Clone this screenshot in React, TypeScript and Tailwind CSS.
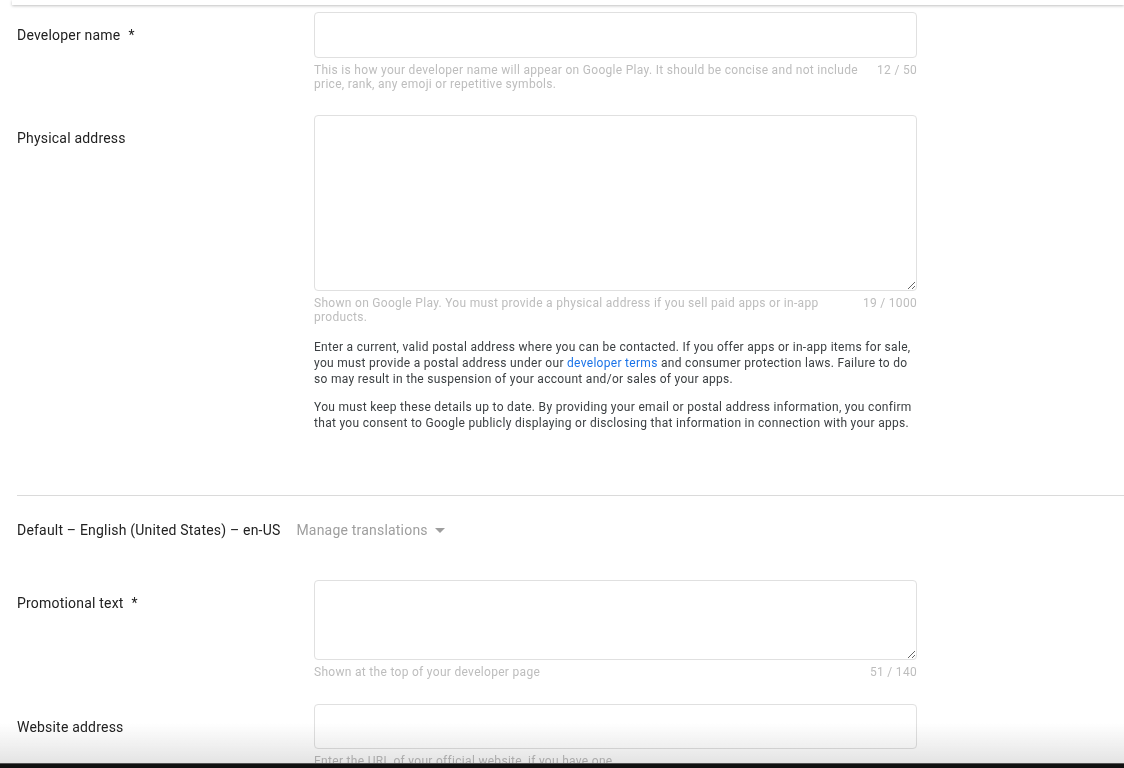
import { ReactNode } from "react";

const font = { fontFamily: "Roboto, 'Liberation Sans', sans-serif" };

function Helper({ text, count }: { text: string; count: string }) {
  return (
    <div className="mt-[5px] flex justify-between gap-3 text-[12px] leading-[14px] tracking-[0.3px] text-[#bdbdbd]">
      <p className="max-w-[552px]">{text}</p>
      <span className="shrink-0">{count}</span>
    </div>
  );
}

function Row({ label, required, children }: { label: string; required?: boolean; children: ReactNode }) {
  return (
    <div className="flex">
      <div className="w-[297px] shrink-0 pt-[13px] text-[14px] leading-[20px] tracking-[0.2px] text-[#212121]">
        {label}
        {required && <span className="ml-2">*</span>}
      </div>
      <div className="w-[603px]">{children}</div>
    </div>
  );
}

export default function App() {
  return (
    <div style={font} className="relative h-[768px] w-[1124px] overflow-hidden bg-white">
      <div className="ml-3 h-[5px] bg-white shadow-[0_1px_3px_rgba(0,0,0,0.25)]" />

      <div className="px-[17px] pt-[7px]">
        <Row label="Developer name" required>
          <input readOnly className="block h-[46px] w-full rounded border border-[#e0e0e0] bg-white outline-none" />
          <Helper
            text="This is how your developer name will appear on Google Play. It should be concise and not include price, rank, any emoji or repetitive symbols."
            count="12 / 50"
          />
        </Row>

        <div className="mt-6">
          <Row label="Physical address">
            <textarea readOnly className="block h-[176px] w-full resize-y rounded border border-[#e0e0e0] bg-white outline-none" />
            <Helper
              text="Shown on Google Play. You must provide a physical address if you sell paid apps or in-app products."
              count="19 / 1000"
            />
            <p className="mt-[15px] text-[12px] leading-[16px] tracking-[0.3px] text-[#3c4043]">
              Enter a current, valid postal address where you can be contacted. If you offer apps or in-app items for sale, you must provide a postal address under our{" "}
              <a className="text-[#1a73e8]">developer terms</a> and consumer protection laws. Failure to do so may result in the suspension of your account and/or sales of your apps.
            </p>
            <p className="mt-3 text-[12px] leading-[16px] tracking-[0.3px] text-[#3c4043]">
              You must keep these details up to date. By providing your email or postal address information, you confirm that you consent to Google publicly displaying or disclosing that information in connection with your apps.
            </p>
          </Row>
        </div>
      </div>

      <div className="ml-[17px] mt-[64px] border-t border-[#dadada]" />

      <div className="px-[17px]">
        <div className="mt-[24px] flex items-center text-[14px] leading-[20px] tracking-[0.2px]">
          <span className="text-[#212121]">Default – English (United States) – en-US</span>
          <span className="ml-4 flex items-center text-[#9e9e9e]">
            Manage translations
            <svg width="10" height="5" viewBox="0 0 10 5" className="ml-[7px]">
              <path d="M0 0h10L5 5z" fill="#9e9e9e" />
            </svg>
          </span>
        </div>

        <div className="mt-[40px]">
          <Row label="Promotional text" required>
            <textarea readOnly className="block h-[80px] w-full resize-y rounded border border-[#e0e0e0] bg-white outline-none" />
            <Helper text="Shown at the top of your developer page" count="51 / 140" />
          </Row>
        </div>

        <div className="mt-[25px]">
          <Row label="Website address">
            <input readOnly className="block h-[45px] w-full rounded border border-[#e0e0e0] bg-white outline-none" />
            <Helper text="Enter the URL of your official website, if you have one" count="" />
          </Row>
        </div>
      </div>

      <div className="pointer-events-none absolute inset-x-0 bottom-0">
        <div className="h-[40px] bg-gradient-to-b from-white/0 to-[#e4e4e4] mix-blend-multiply" />
        <div className="h-[5px] border-t border-[#555] bg-[#111]" />
      </div>
    </div>
  );
}
